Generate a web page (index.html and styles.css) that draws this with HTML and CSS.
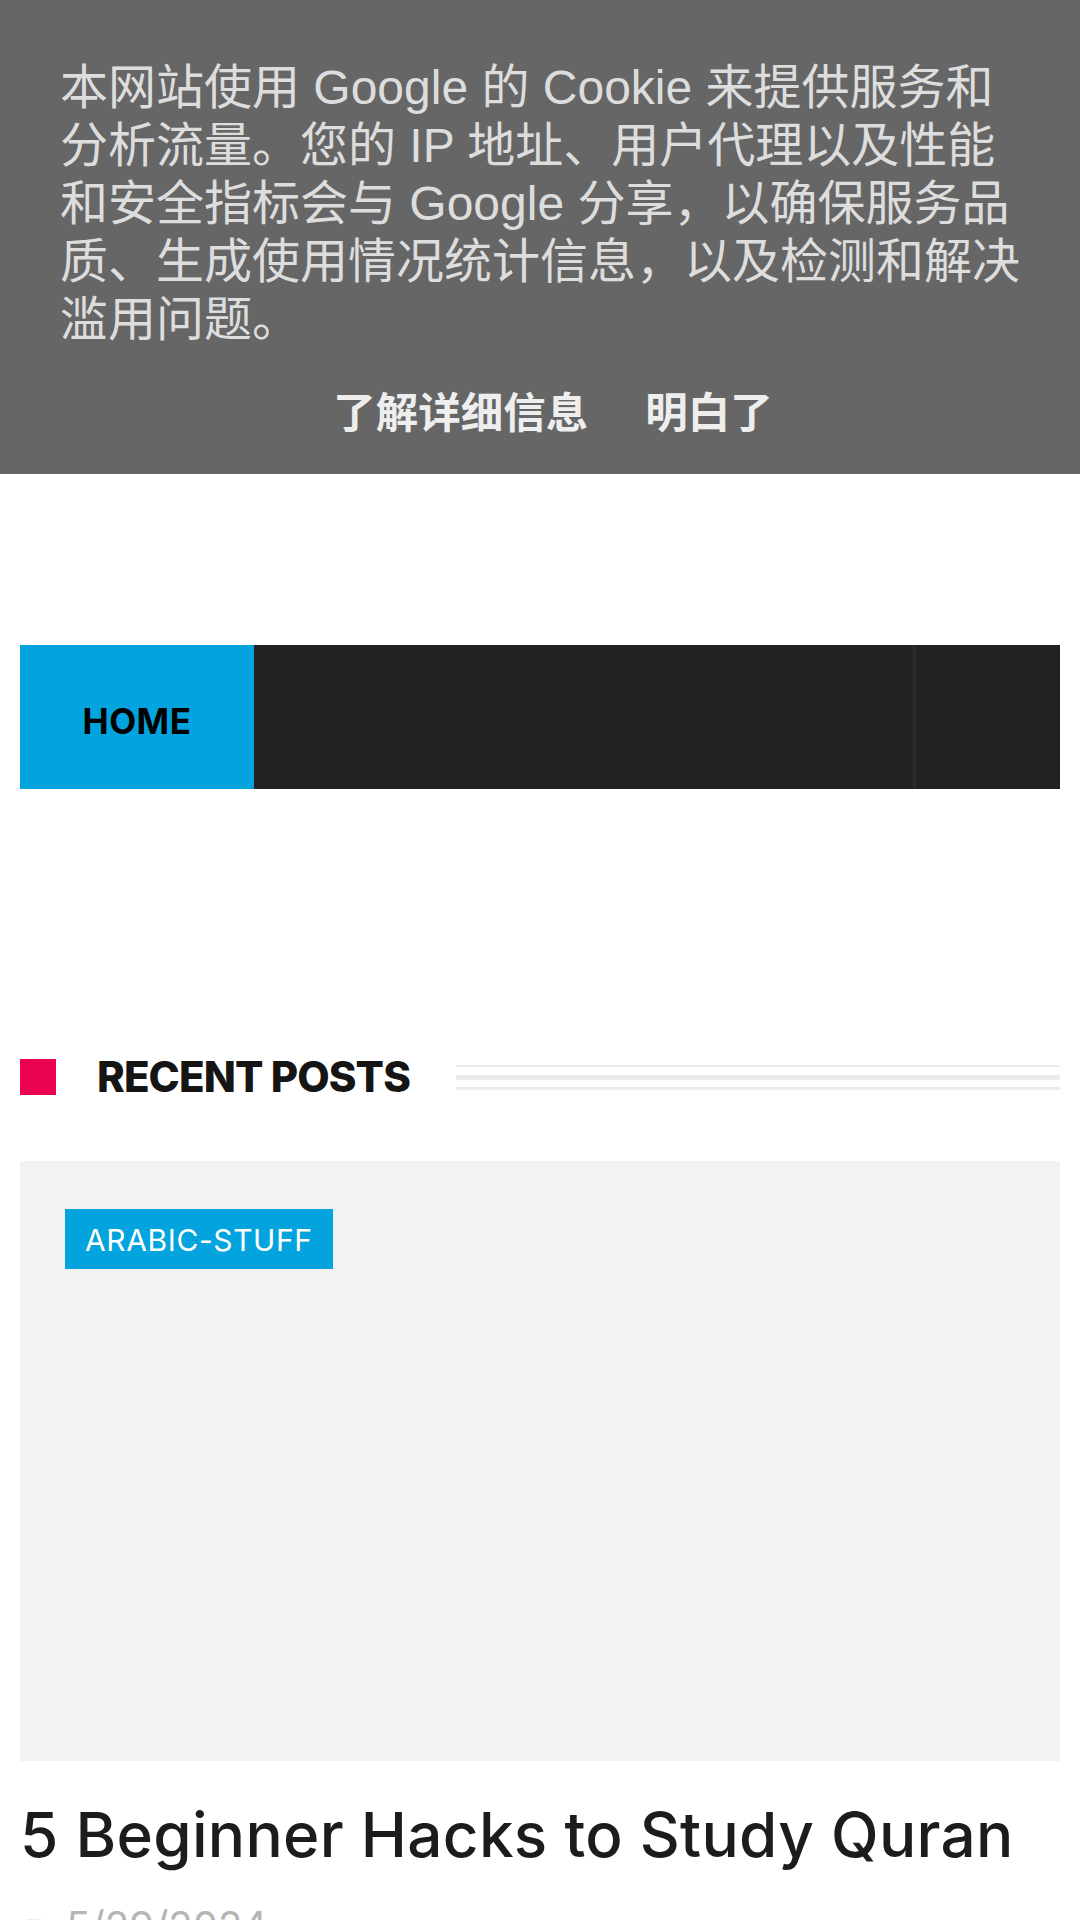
FILE: index.html
```html
<!DOCTYPE html>
<html lang="zh-CN">
<head>
  <meta charset="UTF-8" />
  <meta name="viewport" content="width=device-width, initial-scale=1.0"/>
  <title>Recent Posts</title>
  <link rel="stylesheet" href="styles.css">
</head>
<body>

  <!-- Cookie 提示 -->
  <div class="cookie-bar">
    <p class="cookie-text">本网站使用 Google 的 Cookie 来提供服务和分析流量。您的 IP 地址、用户代理以及性能和安全指标会与 Google 分享，以确保服务品质、生成使用情况统计信息，以及检测和解决滥用问题。</p>
    <div class="cookie-actions">
      <a href="#">了解详细信息</a>
      <a href="#">明白了</a>
    </div>
  </div>

  <div class="page">
    <nav class="main-nav">
      <a class="nav-home" href="#">HOME</a>
      <div class="nav-fill"></div>
      <div class="nav-side"></div>
    </nav>

    <section class="recent">
      <div class="section-head">
        <span class="head-mark"></span>
        <h2>RECENT POSTS</h2>
        <div class="head-lines"><span></span><span></span><span></span></div>
      </div>

      <article class="post">
        <div class="post-thumb">
          <a class="post-tag" href="#">ARABIC-STUFF</a>
        </div>
        <h3 class="post-title">5 Beginner Hacks to Study Quran</h3>
        <div class="post-meta">
          <svg width="16" height="16" viewBox="0 0 16 16"><rect x="1.5" y="2.5" width="13" height="12" fill="none" stroke="#bbb" stroke-width="1.5"/></svg>
          <span>5/29/2024</span>
        </div>
      </article>
    </section>
  </div>

</body>
</html>
```

FILE: styles.css
```css
:root {
  --blue: #03a3dd;
  --pink: #eb0252;
  --dark: #222222;
}
* {
  box-sizing: border-box;
}
body {
  margin: 0;
  font-family: Inter, "Noto Sans", sans-serif;
  color: #1a1a1a;
  background: white;
  overflow: hidden;
}
a {
  text-decoration: none;
}

/* cookie bar */
.cookie-bar {
  background-color: #666666;
  padding: 59px 60px 35px;
  height: 474px;
}
.cookie-text {
  margin: 0;
  font-family: "Liberation Sans", Arial, "Noto Sans CJK SC", sans-serif;
  font-size: 48px;
  line-height: 58px;
  color: #dddddd;
}
.cookie-actions {
  display: flex;
  justify-content: center;
  gap: 57px;
  margin-top: 40px;
  padding-left: 26px;
}
.cookie-actions a {
  font-family: "Liberation Sans", Arial, "Noto Sans CJK SC", sans-serif;
  font-weight: bold;
  font-size: 42.5px;
  line-height: 50px;
  color: #eeeeee;
}

/* page */
.page {
  padding: 0 20px;
}
.main-nav {
  display: flex;
  height: 144px;
  margin-top: 171px;
  background-color: var(--dark);
}
.nav-home {
  width: 234px;
  display: flex;
  align-items: center;
  justify-content: center;
  padding-top: 8px;
  background-color: var(--blue);
  color: black;
  font-weight: 700;
  font-size: 35px;
  letter-spacing: 0.5px;
}
.nav-fill {
  flex: 1;
}
.nav-side {
  width: 147px;
  border-left: 3px solid #2b2b2b;
}

/* section heading */
.section-head {
  display: flex;
  align-items: center;
  margin-top: 270px;
  height: 36px;
}
.head-mark {
  width: 36px;
  height: 36px;
  background-color: var(--pink);
  margin-right: 41px;
}
.section-head h2 {
  margin: 0;
  font-size: 42px;
  font-weight: 800;
  letter-spacing: -0.9px;
  line-height: 36px;
  color: #151515;
}
.head-lines {
  flex: 1;
  display: flex;
  flex-direction: column;
  gap: 8px;
  margin-left: 46px;
}
.head-lines span {
  display: block;
  height: 2px;
  background-color: #ececec;
}
.head-lines span:nth-child(2) {
  height: 5px;
}
.head-lines span:nth-child(3) {
  height: 3px;
  margin-top: -1px;
}

/* post card */
.post {
  margin-top: 66px;
}
.post-thumb {
  height: 600px;
  background-color: #f2f2f2;
  padding: 48px 45px;
}
.post-tag {
  display: inline-block;
  padding: 0 20px;
  height: 60px;
  line-height: 62px;
  background-color: var(--blue);
  color: white;
  font-size: 30px;
  letter-spacing: 0.6px;
}
.post-title {
  margin: 38px 0 0;
  font-size: 62px;
  font-weight: 500;
  line-height: 72px;
  letter-spacing: 0.3px;
  color: #1c1c1c;
}
.post-meta {
  display: flex;
  align-items: center;
  gap: 24px;
  margin-top: 30px;
  padding-left: 6px;
  font-size: 40px;
  color: #b5b5b5;
}
```
